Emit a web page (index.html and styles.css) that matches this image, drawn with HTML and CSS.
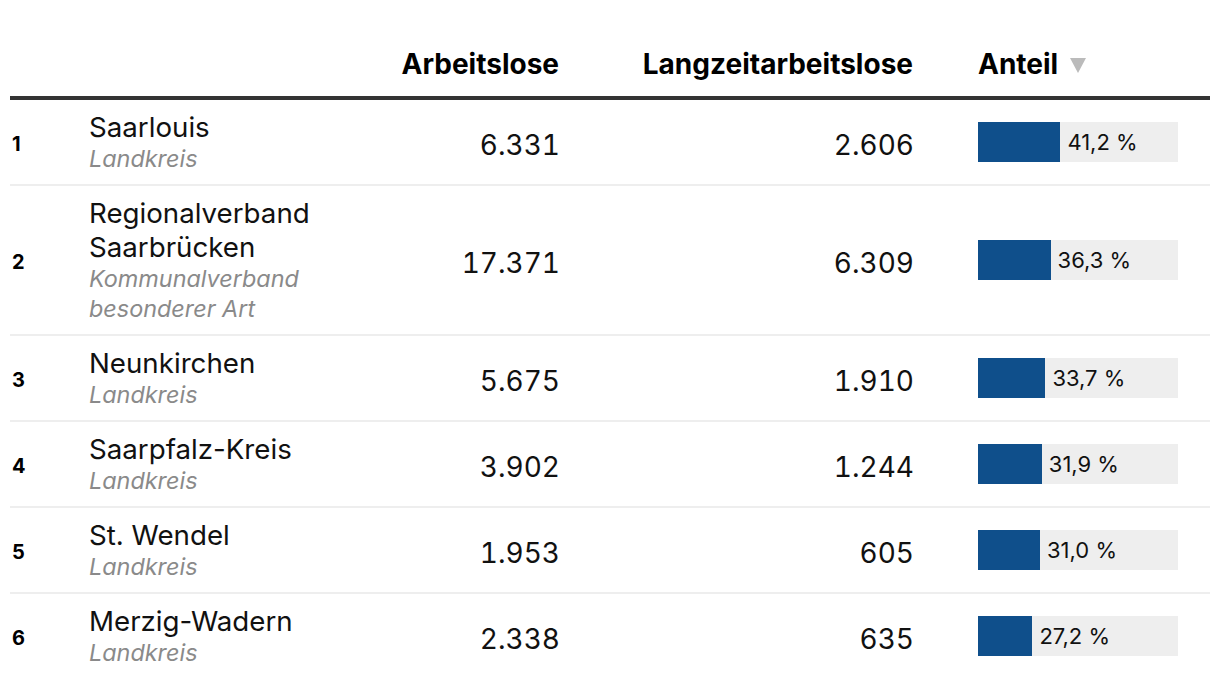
FILE: index.html
```html
<!DOCTYPE html>
<html lang="de">
<head>
<meta charset="utf-8">
<link rel="stylesheet" href="styles.css">
</head>
<body>
<div class="table">
  <div class="row head">
    <div class="c rank"></div>
    <div class="c name"></div>
    <div class="c num">Arbeitslose</div>
    <div class="c num">Langzeitarbeitslose</div>
    <div class="c share">Anteil<span class="sort"></span></div>
  </div>
  <div class="row">
    <div class="c rank">1</div>
    <div class="c name"><div class="title">Saarlouis</div><div class="sub">Landkreis</div></div>
    <div class="c num"><span class="v">6.331</span></div>
    <div class="c num"><span class="v">2.606</span></div>
    <div class="c share"><div class="bar"><div class="fill" style="width:41.2%"></div><span class="lbl">41,2 %</span></div></div>
  </div>
  <div class="row">
    <div class="c rank">2</div>
    <div class="c name"><div class="title">Regionalverband Saarbrücken</div><div class="sub">Kommunalverband besonderer Art</div></div>
    <div class="c num"><span class="v">17.371</span></div>
    <div class="c num"><span class="v">6.309</span></div>
    <div class="c share"><div class="bar"><div class="fill" style="width:36.3%"></div><span class="lbl">36,3 %</span></div></div>
  </div>
  <div class="row">
    <div class="c rank">3</div>
    <div class="c name"><div class="title">Neunkirchen</div><div class="sub">Landkreis</div></div>
    <div class="c num"><span class="v">5.675</span></div>
    <div class="c num"><span class="v">1.910</span></div>
    <div class="c share"><div class="bar"><div class="fill" style="width:33.7%"></div><span class="lbl">33,7 %</span></div></div>
  </div>
  <div class="row">
    <div class="c rank">4</div>
    <div class="c name"><div class="title">Saarpfalz-Kreis</div><div class="sub">Landkreis</div></div>
    <div class="c num"><span class="v">3.902</span></div>
    <div class="c num"><span class="v">1.244</span></div>
    <div class="c share"><div class="bar"><div class="fill" style="width:31.9%"></div><span class="lbl">31,9 %</span></div></div>
  </div>
  <div class="row">
    <div class="c rank">5</div>
    <div class="c name"><div class="title">St. Wendel</div><div class="sub">Landkreis</div></div>
    <div class="c num"><span class="v">1.953</span></div>
    <div class="c num"><span class="v">605</span></div>
    <div class="c share"><div class="bar"><div class="fill" style="width:31.0%"></div><span class="lbl">31,0 %</span></div></div>
  </div>
  <div class="row last">
    <div class="c rank">6</div>
    <div class="c name"><div class="title">Merzig-Wadern</div><div class="sub">Landkreis</div></div>
    <div class="c num"><span class="v">2.338</span></div>
    <div class="c num"><span class="v">635</span></div>
    <div class="c share"><div class="bar"><div class="fill" style="width:27.2%"></div><span class="lbl">27,2 %</span></div></div>
  </div>
</div>
</body>
</html>
```

FILE: styles.css
```css
html, body {
  margin: 0;
  padding: 0;
  background: #fff;
}
body {
  font-family: Inter, "Noto Sans", sans-serif;
  color: #111;
}
.table {
  margin: 0 10px;
  padding-top: 48px;
}
.row {
  display: grid;
  grid-template-columns: 79px 230px 240px 354px 297px;
  align-items: center;
  padding: 10px 0;
  border-bottom: 2px solid #eeeeee;
}
.row.last {
  border-bottom: none;
}
.row.head {
  align-items: end;
  padding: 0 0 16px;
  border-bottom: 4px solid #333;
  font-weight: 700;
  font-size: 28px;
  line-height: 32px;
  color: #000;
}
.c.num {
  text-align: right;
  font-size: 28px;
  font-variant-numeric: tabular-nums;
}
.row:not(.head) .c.num {
  padding-top: 6px;
}
.row:not(.head) .c.rank {
  padding-top: 4px;
}
.head .c.num {
  font-size: 28px;
}
.v {
  margin-right: -1px;
}
.c.share {
  padding-left: 65px;
}
.rank {
  font-weight: 700;
  font-size: 20px;
  padding-left: 2px;
  color: #000;
}
.title {
  font-size: 27.7px;
  line-height: 34px;
}
.sub {
  font-size: 23.4px;
  line-height: 30px;
  font-style: italic;
  color: #8a8a8a;
}
.sort {
  display: inline-block;
  width: 0;
  height: 0;
  margin-left: 12px;
  border-left: 8px solid transparent;
  border-right: 8px solid transparent;
  border-top: 15px solid #bbb;
  vertical-align: 1px;
}
.bar {
  width: 200px;
  height: 40px;
  background: #eeeeee;
  display: flex;
  align-items: center;
}
.fill {
  height: 100%;
  background: #0f4f8b;
}
.lbl {
  padding-left: 7px;
  font-size: 22px;
  white-space: nowrap;
}
```
